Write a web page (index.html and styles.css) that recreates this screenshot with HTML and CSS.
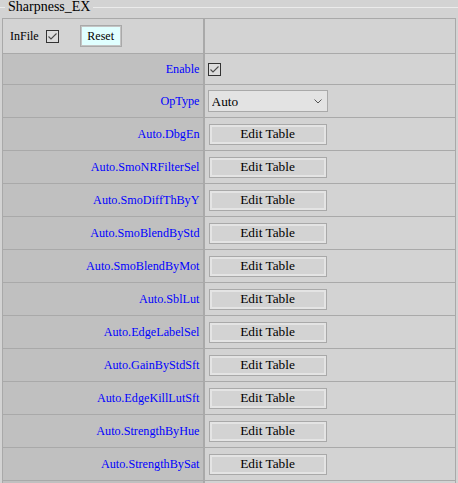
FILE: index.html
```html
<!DOCTYPE html>
<html>
<head>
<meta charset="utf-8">
<link rel="stylesheet" href="styles.css">
</head>
<body>
<div class="group">
  <div class="group-title"><span class="title-text">Sharpness_EX</span></div>
  <table class="grid">
    <colgroup><col class="c1"><col class="c2"></colgroup>
    <tr class="row-head">
      <td class="head-cell">
        <div class="head-line">
          <span class="infile">InFile</span>
          <span class="cb"><svg width="11" height="11" viewBox="0 0 11 11"><path d="M1.5 5.5 L4 8 L9.5 2.5" fill="none" stroke="#4a4a4a" stroke-width="1.1"/></svg></span>
          <button class="reset">Reset</button>
        </div>
      </td>
      <td class="val head-right"></td>
    </tr>
    <tr class="row-enable">
      <td class="lbl">Enable</td>
      <td class="val"><div class="val-in"><span class="cb cb-val"><svg width="11" height="11" viewBox="0 0 11 11"><path d="M1.5 5.5 L4 8 L9.5 2.5" fill="none" stroke="#4a4a4a" stroke-width="1.1"/></svg></span></div></td>
    </tr>
    <tr class="row-op">
      <td class="lbl">OpType</td>
      <td class="val">
        <div class="val-in">
          <span class="sel-wrap">
            <select class="sel"><option>Auto</option></select>
            <svg class="chev" width="8" height="5" viewBox="0 0 8 5"><path d="M0.5 0.5 L4 4 L7.5 0.5" fill="none" stroke="#555" stroke-width="1"/></svg>
          </span>
        </div>
      </td>
    </tr>
    <tr class="row"><td class="lbl">Auto.DbgEn</td><td class="val"><div class="val-in"><button class="edit">Edit Table</button></div></td></tr>
    <tr class="row"><td class="lbl">Auto.SmoNRFilterSel</td><td class="val"><div class="val-in"><button class="edit">Edit Table</button></div></td></tr>
    <tr class="row"><td class="lbl">Auto.SmoDiffThByY</td><td class="val"><div class="val-in"><button class="edit">Edit Table</button></div></td></tr>
    <tr class="row"><td class="lbl">Auto.SmoBlendByStd</td><td class="val"><div class="val-in"><button class="edit">Edit Table</button></div></td></tr>
    <tr class="row"><td class="lbl">Auto.SmoBlendByMot</td><td class="val"><div class="val-in"><button class="edit">Edit Table</button></div></td></tr>
    <tr class="row"><td class="lbl">Auto.SblLut</td><td class="val"><div class="val-in"><button class="edit">Edit Table</button></div></td></tr>
    <tr class="row"><td class="lbl">Auto.EdgeLabelSel</td><td class="val"><div class="val-in"><button class="edit">Edit Table</button></div></td></tr>
    <tr class="row"><td class="lbl">Auto.GainByStdSft</td><td class="val"><div class="val-in"><button class="edit">Edit Table</button></div></td></tr>
    <tr class="row"><td class="lbl">Auto.EdgeKillLutSft</td><td class="val"><div class="val-in"><button class="edit">Edit Table</button></div></td></tr>
    <tr class="row"><td class="lbl">Auto.StrengthByHue</td><td class="val"><div class="val-in"><button class="edit">Edit Table</button></div></td></tr>
    <tr class="row"><td class="lbl">Auto.StrengthBySat</td><td class="val"><div class="val-in"><button class="edit">Edit Table</button></div></td></tr>
    <tr class="row"><td class="lbl"></td><td class="val"></td></tr>
  </table>
</div>
</body>
</html>
```
FILE: styles.css
```css
html, body {
  margin: 0;
  padding: 0;
  background: #d3d3d3;
  overflow: hidden;
  font-family: "Liberation Serif", "Times New Roman", serif;
}

.group {
  width: 458px;
}

.group-title {
  display: flex;
  align-items: flex-start;
  height: 16px;
}

.group-title::before,
.group-title::after {
  content: "";
  height: 1px;
  background: #ebebeb;
  margin-top: 7px;
}

.group-title::before {
  width: 5px;
}

.group-title::after {
  flex: 1;
}

.title-text {
  font-size: 14px;
  line-height: 14px;
  padding: 0 3px;
  color: #000;
}

.grid {
  border-collapse: collapse;
  table-layout: fixed;
  width: 454px;
  margin: 2px 0 0 2px;
}

.c1 { width: 201px; }

.grid td {
  border: 1px solid #a9a9a9;
  padding: 0;
  vertical-align: middle;
}

.grid td.lbl,
.grid td.head-cell {
  border-right: 2px solid #a9a9a9;
}

.lbl {
  background: #c0c0c0;
  color: #0000ff;
  font-size: 12.2px;
  text-align: right;
  padding-right: 3px !important;
}

.head-cell {
  background: #d3d3d3;
}

.val {
  background: #d3d3d3;
}

.val-in {
  display: flex;
  align-items: center;
}

.row-head td { height: 34px; }
.row-enable td { height: 30px; }
.row-op td { height: 32px; }
.row td { height: 32px; }

.head-line {
  display: flex;
  align-items: center;
  padding-left: 7px;
}

.infile {
  font-size: 12px;
  color: #000;
}

.cb {
  display: inline-flex;
  align-items: center;
  justify-content: center;
  box-sizing: border-box;
  width: 13px;
  height: 13px;
  border: 1px solid #333;
  background: #dcdcdc;
  margin-left: 7px;
}

.cb-val {
  margin-left: 3px;
}

.reset {
  margin-left: 21px;
  height: 22px;
  width: 42px;
  padding: 0;
  font-family: "Liberation Serif", "Times New Roman", serif;
  font-size: 12px;
  color: #000;
  background: #e0ffff;
  border: 1px solid #a9a9a9;
  box-shadow: inset 0 0 0 1px #c4c4c4;
}

.sel-wrap {
  position: relative;
  display: block;
  margin-left: 3px;
}

.sel {
  appearance: none;
  -webkit-appearance: none;
  box-sizing: border-box;
  width: 120px;
  height: 22px;
  border: 1px solid #a9a9a9;
  border-radius: 0;
  background: #e3e3e3;
  font-family: "Liberation Serif", "Times New Roman", serif;
  font-size: 13.33px;
  color: #000;
  padding: 0 0 0 3px;
  margin: 0;
  display: block;
}

.chev {
  position: absolute;
  right: 6px;
  top: 9px;
}

.edit {
  box-sizing: border-box;
  width: 118px;
  height: 21px;
  margin: 0 0 0 4px;
  padding: 0;
  font-family: "Liberation Serif", "Times New Roman", serif;
  font-size: 13.33px;
  color: #000;
  background: #d3d3d3;
  border: 1px solid #a9a9a9;
  box-shadow: inset 0 0 0 2px #e4e4e4;
}
```
